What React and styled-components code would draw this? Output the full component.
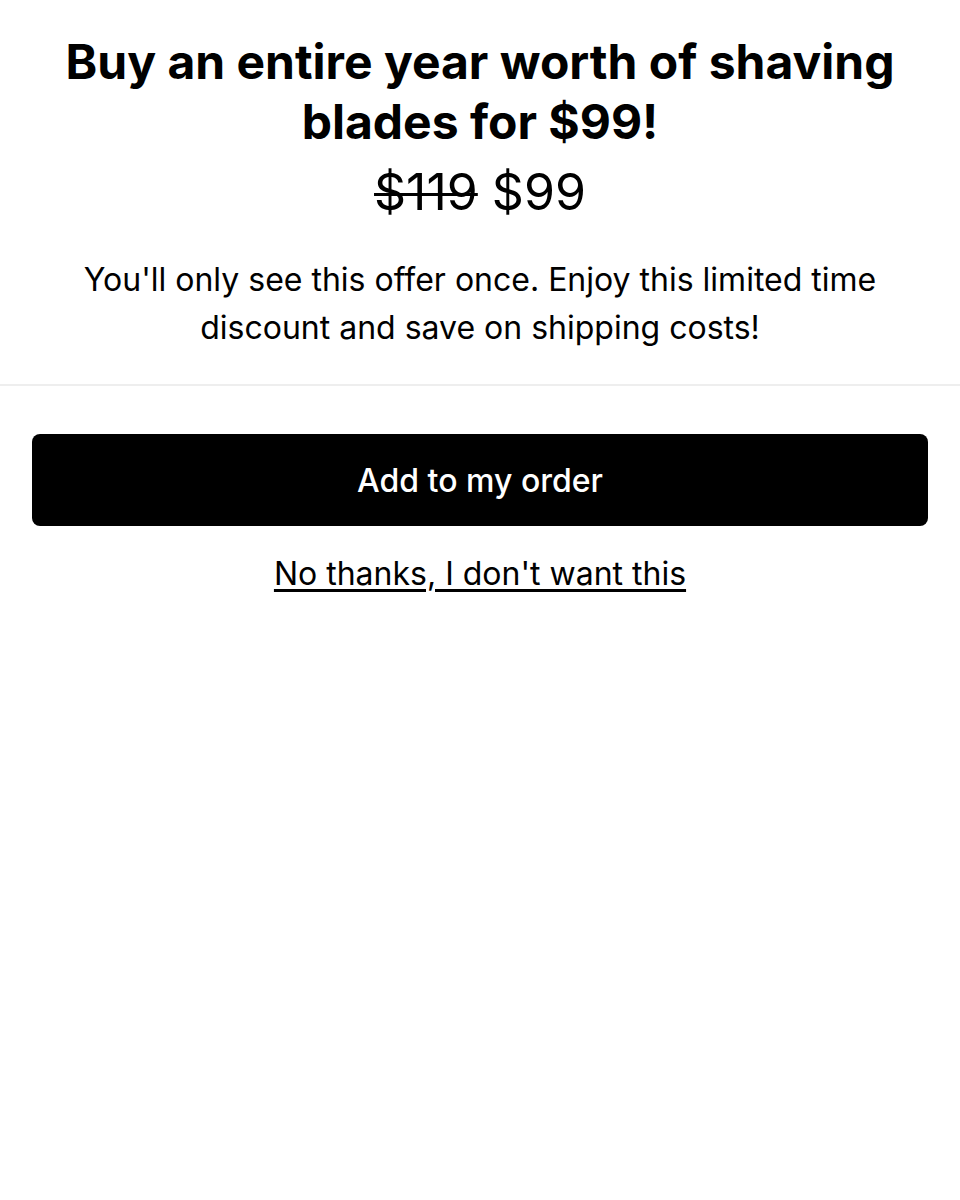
import styled, { createGlobalStyle } from "styled-components";

const GlobalStyle = createGlobalStyle`
  body {
    margin: 0;
    background: #fff;
    font-family: Inter, "Noto Sans", sans-serif;
    color: #000;
  }
`;

const App = () => {
  return (
    <>
      <GlobalStyle />
      <Offer>
        <Header>
          <Title>Buy an entire year worth of shaving blades for $99!</Title>
          <Price>
            <OldPrice>$119</OldPrice> $99
          </Price>
          <Description>
            You'll only see this offer once. Enjoy this limited time discount
            and save on shipping costs!
          </Description>
        </Header>
        <Actions>
          <AcceptButton type="button">Add to my order</AcceptButton>
          <DeclineLink href="#">No thanks, I don't want this</DeclineLink>
        </Actions>
      </Offer>
    </>
  );
};

export default App;

const Offer = styled.div`
  display: flex;
  flex-direction: column;
`;

const Header = styled.div`
  display: flex;
  flex-direction: column;
  align-items: center;
  text-align: center;
  padding: 32px 32px 32px;
  border-bottom: 2px solid #eeeeee;
`;

const Title = styled.h1`
  margin: 0;
  font-size: 48px;
  line-height: 60px;
  font-weight: 700;
  max-width: 880px;
`;

const Price = styled.div`
  margin-top: 10px;
  font-size: 50px;
  line-height: 60px;
  font-weight: 400;
`;

const OldPrice = styled.s`
  text-decoration-thickness: 3px;
`;

const Description = styled.p`
  margin: 34px 0 0;
  font-size: 32px;
  line-height: 48px;
  max-width: 860px;
`;

const Actions = styled.div`
  display: flex;
  flex-direction: column;
  align-items: center;
  padding: 48px 32px;
  gap: 24px;
`;

const AcceptButton = styled.button`
  width: 100%;
  height: 92px;
  border: none;
  border-radius: 8px;
  background: #000;
  color: #fff;
  font-family: Inter, "Noto Sans", sans-serif;
  font-size: 32px;
  font-weight: 500;
  cursor: pointer;
`;

const DeclineLink = styled.a`
  color: #000;
  font-size: 32px;
  line-height: 48px;
  text-decoration: underline;
  text-underline-offset: 4px;
`;
